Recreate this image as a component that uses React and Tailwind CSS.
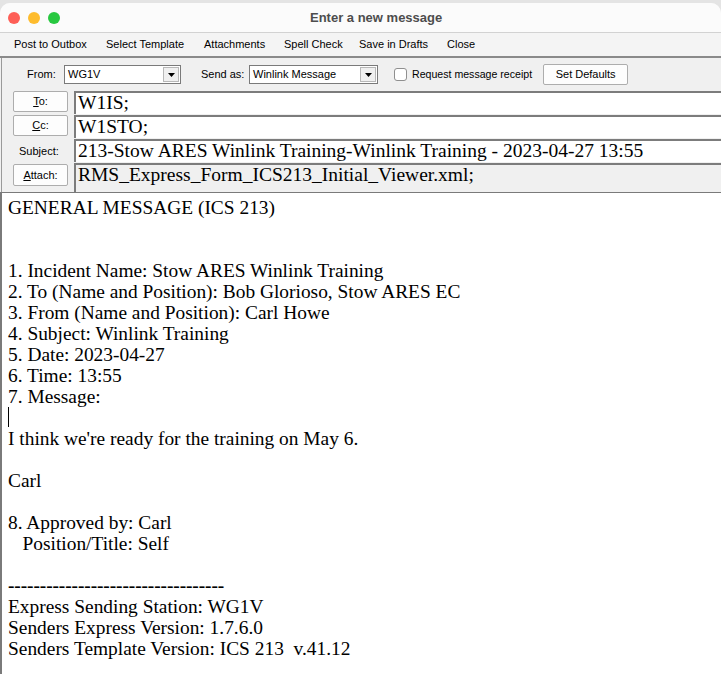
const ui = "font-['Liberation_Sans',Arial,sans-serif]";
const serif = "font-['Liberation_Serif','Times_New_Roman',serif]";

const menuItems = [
  { label: 'Post to Outbox', w: 'w-[92px]' },
  { label: 'Select Template', w: 'w-[98px]' },
  { label: 'Attachments', w: 'w-[80px]' },
  { label: 'Spell Check', w: 'w-[75px]' },
  { label: 'Save in Drafts', w: 'w-[88px]' },
  { label: 'Close', w: 'w-[40px]' },
];

const bodyLines = [
  'GENERAL MESSAGE (ICS 213)',
  '',
  '',
  '1. Incident Name: Stow ARES Winlink Training',
  '2. To (Name and Position): Bob Glorioso, Stow ARES EC',
  '3. From (Name and Position): Carl Howe',
  '4. Subject: Winlink Training',
  '5. Date: 2023-04-27',
  '6. Time: 13:55',
  '7. Message:',
  '__CARET__',
  "I think we're ready for the training on May 6.",
  '',
  'Carl',
  '',
  '8. Approved by: Carl',
  '   Position/Title: Self',
  '',
  '__DASHES__',
  'Express Sending Station: WG1V',
  'Senders Express Version: 1.7.6.0',
  'Senders Template Version: ICS 213  v.41.12',
];

function Combo({ value, className }) {
  return (
    <div className={`flex h-[19px] items-center border border-[#7a7a7a] bg-white ${className}`}>
      <span className="flex-1 pl-[3px] text-[11px] leading-none text-black">{value}</span>
      <span className="mr-[1px] flex h-[15px] w-[16px] items-center justify-center border border-[#b8b8b8] bg-[#f0f0f0]">
        <svg width="7" height="4" viewBox="0 0 7 4">
          <path d="M0 0h7L3.5 4z" fill="#000" />
        </svg>
      </span>
    </div>
  );
}

function Btn({ children, className }) {
  return (
    <div
      className={`flex items-center justify-center rounded-[2px] border border-[#adadad] bg-[#fdfdfd] text-[11px] text-black ${className}`}
    >
      {children}
    </div>
  );
}

function Field({ children, grey, tall }) {
  return (
    <div
      className={`flex flex-1 items-start border-l-2 border-t-2 border-[#7c7c7c] pl-[2px] ${serif} text-[19.5px] leading-[20px] text-black ${
        grey ? 'bg-[#f0f0f0]' : 'bg-white'
      } ${tall ? 'h-[29px]' : 'h-[23px]'}`}
    >
      <span className="whitespace-nowrap">{children}</span>
    </div>
  );
}

export default function App() {
  return (
    <div className={`h-[674px] w-[721px] overflow-hidden bg-[#e4e4e4] ${ui}`}>
      <div className="mt-[3px] flex h-full flex-col overflow-hidden rounded-t-[10px] bg-[#f0f0f0]">
        {/* title bar */}
        <div className="flex h-[30px] shrink-0 items-center border-b border-[#d2d2d2] bg-[#fbfbfb]">
          <div className="flex items-center gap-[8px] pl-[8px]">
            <span className="h-[12px] w-[12px] rounded-full bg-[#fe5f57]" />
            <span className="h-[12px] w-[12px] rounded-full bg-[#febc2e]" />
            <span className="h-[12px] w-[12px] rounded-full bg-[#28c840]" />
          </div>
          <span className="ml-[250px] text-[13px] font-bold text-[#4d4d4d]">Enter a new message</span>
        </div>

        {/* menu */}
        <div className="flex h-[25px] shrink-0 items-center border-b-2 border-[#8a8a8a] bg-[#f4f4f4] pl-[14px] text-[11px] text-black">
          {menuItems.map((m) => (
            <span key={m.label} className={`whitespace-nowrap ${m.w}`}>
              {m.label}
            </span>
          ))}
        </div>

        {/* header panel */}
        <div className="ml-[1px] flex shrink-0 flex-col border-l border-[#9a9a9a] bg-[#f0f0f0]">
          <div className="flex h-[33px] items-center text-[11px] text-black">
            <span className="ml-[25px] w-[37px]">From:</span>
            <Combo value="WG1V" className="w-[117px]" />
            <span className="ml-[20px] w-[48px]">Send as:</span>
            <Combo value="Winlink Message" className="w-[129px]" />
            <span className="ml-[16px] h-[13px] w-[13px] rounded-[3px] border border-[#8f8f8f] bg-white" />
            <span className="ml-[5px] whitespace-nowrap text-[10.6px]">Request message receipt</span>
            <Btn className="ml-[11px] h-[21px] w-[85px]">Set Defaults</Btn>
          </div>

          <div className="flex h-[24px]">
            <div className="w-[72px] shrink-0">
              <Btn className="ml-[11px] h-[21px] w-[55px]">
                <span>
                  <span className="underline">T</span>o:
                </span>
              </Btn>
            </div>
            <Field>W1IS;</Field>
          </div>
          <div className="flex h-[24px]">
            <div className="w-[72px] shrink-0">
              <Btn className="ml-[11px] h-[21px] w-[55px]">
                <span>
                  <span className="underline">C</span>c:
                </span>
              </Btn>
            </div>
            <Field>W1STO;</Field>
          </div>
          <div className="flex h-[24px]">
            <div className="flex w-[72px] shrink-0 items-center">
              <span className="ml-[17px] text-[11px] text-black">Subject:</span>
            </div>
            <Field>213-Stow ARES Winlink Training-Winlink Training - 2023-04-27 13:55</Field>
          </div>
          <div className="flex h-[29px]">
            <div className="w-[72px] shrink-0 pt-[1px]">
              <Btn className="ml-[11px] h-[22px] w-[55px]">
                <span>
                  <span className="underline">A</span>ttach:
                </span>
              </Btn>
            </div>
            <Field grey tall>
              RMS_Express_Form_ICS213_Initial_Viewer.xml;
            </Field>
          </div>
        </div>

        {/* body */}
        <div
          className={`flex-1 border-l-2 border-t border-[#7a7a7a] bg-white pl-[6px] pt-[4px] ${serif} text-[19.4px] leading-[21px] text-black`}
        >
          {bodyLines.map((line, i) => {
            if (line === '__CARET__')
              return (
                <div key={i} className="h-[21px]">
                  <span className="block h-[20px] w-[1px] bg-black" />
                </div>
              );
            if (line === '__DASHES__')
              return (
                <div key={i} className="h-[21px] font-bold tracking-[-0.1px]">
                  ----------------------------------
                </div>
              );
            return (
              <div key={i} className="h-[21px] whitespace-pre">
                {line}
              </div>
            );
          })}
        </div>
      </div>
    </div>
  );
}
